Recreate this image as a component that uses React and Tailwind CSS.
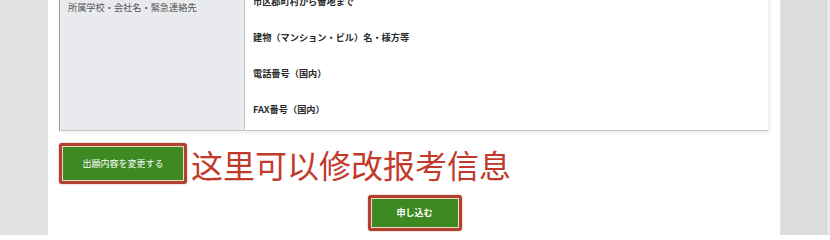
export default function App() {
  const jp = { fontFamily: '"Noto Sans CJK JP", "Noto Sans", sans-serif' };
  const sc = { fontFamily: '"Noto Sans CJK SC", "Noto Sans", sans-serif' };
  return (
    <div className="w-[830px] h-[235px] flex overflow-hidden bg-white" style={jp}>
      <div className="w-[48px] shrink-0 bg-[#e2e2e2]" />
      <div className="w-[732px] shrink-0 bg-white pl-[11px] pr-[12px]">
        <div className="mt-[-16px] flex h-[147px] border-l border-b border-l-[#9a9a9a] border-b-[#c9c9c9] shadow-[2px_2px_3px_rgba(0,0,0,0.07)]">
          <div className="w-[185px] shrink-0 bg-[#e8eaed] border-r border-[#c4c4c4] pl-[8px] pt-[17px]">
            <div className="text-[9.2px] leading-[12px] text-[#555]">所属学校・会社名・緊急連絡先</div>
          </div>
          <div className="flex-1 flex flex-col pl-[8px]">
            {["市区郡町村から番地まで", "建物（マンション・ビル）名・様方等", "電話番号（国内）", "FAX番号（国内）"].map((t) => (
              <div key={t} className="h-[36px] shrink-0 flex items-center text-[9.2px] font-bold text-[#2a2a2a]">
                {t}
              </div>
            ))}
          </div>
        </div>
        <div className="mt-[12px] flex items-center">
          <div className="w-[128px] h-[41px] rounded-[3px] border-[3px] border-[#b0412e] p-[1px] bg-[#f3d6c6] shadow-[0_0_2px_rgba(176,65,46,0.5)]">
            <div className="w-full h-full bg-[#3e8a22] flex items-center justify-center text-white text-[9px]">
              出願内容を変更する
            </div>
          </div>
          <div className="ml-[4px] text-[32px] leading-[36px] text-[#c23a2c]" style={sc}>
            这里可以修改报考信息
          </div>
        </div>
        <div className="mt-[11px] flex justify-center pl-[2px]">
          <div className="w-[94px] h-[36px] rounded-[3px] border-[3px] border-[#b0412e] p-[1px] bg-[#f3d6c6] shadow-[0_0_2px_rgba(176,65,46,0.5)]">
            <div className="w-full h-full bg-[#3e8a22] flex items-center justify-center text-white text-[9px] font-bold">
              申し込む
            </div>
          </div>
        </div>
      </div>
      <div className="w-[46px] shrink-0 bg-[#dcdcdc] border-l border-[#e6e6e6]" />
      <div className="flex-1 bg-[#ebebeb] border-l border-[#d0d0d0]" />
    </div>
  );
}
